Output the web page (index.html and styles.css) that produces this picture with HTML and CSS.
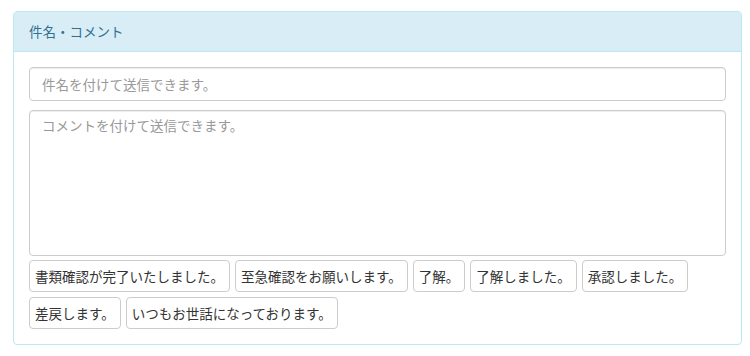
FILE: index.html
```html
<!DOCTYPE html>
<html lang="ja">
<head>
    <meta charset="UTF-8">
    <title>件名・コメント</title>
    <link rel="stylesheet" href="styles.css">
</head>
<body>
    <div class="panel">
        <div class="panel-heading">件名・コメント</div>
        <div class="panel-body">
            <input class="field" type="text" placeholder="件名を付けて送信できます。">
            <textarea class="field area" placeholder="コメントを付けて送信できます。"></textarea>
            <div class="phrases">
                <button class="phrase">書類確認が完了いたしました。</button>
                <button class="phrase">至急確認をお願いします。</button>
                <button class="phrase">了解。</button>
                <button class="phrase">了解しました。</button>
                <button class="phrase">承認しました。</button>
                <button class="phrase">差戻します。</button>
                <button class="phrase">いつもお世話になっております。</button>
            </div>
        </div>
    </div>
</body>
</html>
```

FILE: styles.css
```css
* {box-sizing: border-box; margin: 0; padding: 0;}
body {
    background: #fff;
    color: #333;
    font-family: "Noto Sans CJK JP", "Noto Sans", sans-serif;
    font-size: 13.5px;
    padding: 11px 8px 0 13px;
}

.panel {
    border: 1px solid #bce8f1;
    border-radius: 4px;
    overflow: hidden;
}

.panel-heading {
    background: #d9edf7;
    color: #31708f;
    border-bottom: 1px solid #bce8f1;
    padding: 9px 15px 10px;
    height: 40px;
    line-height: 20px;
    font-size: 13.5px;
}

.panel-body {
    padding: 15px;
    display: flex;
    flex-direction: column;
}

.field {
    display: block;
    width: 100%;
    height: 34px;
    padding: 6px 12px;
    border: 1px solid #ccc;
    border-radius: 4px;
    box-shadow: inset 0 1px 1px rgba(0, 0, 0, 0.075);
    font: inherit;
    color: #555;
    line-height: 20px;
}
.field::placeholder {color: #999;}

.area {
    margin-top: 9px;
    height: 146px;
    padding-top: 4px;
    resize: none;
}

.phrases {
    margin-top: 4px;
    display: flex;
    flex-wrap: wrap;
    gap: 5px 5px;
}

.phrase {
    background: #fff;
    border: 1px solid #ccc;
    border-radius: 4px;
    padding: 5px;
    height: 32px;
    font: inherit;
    color: #333;
    line-height: 20px;
}
```
